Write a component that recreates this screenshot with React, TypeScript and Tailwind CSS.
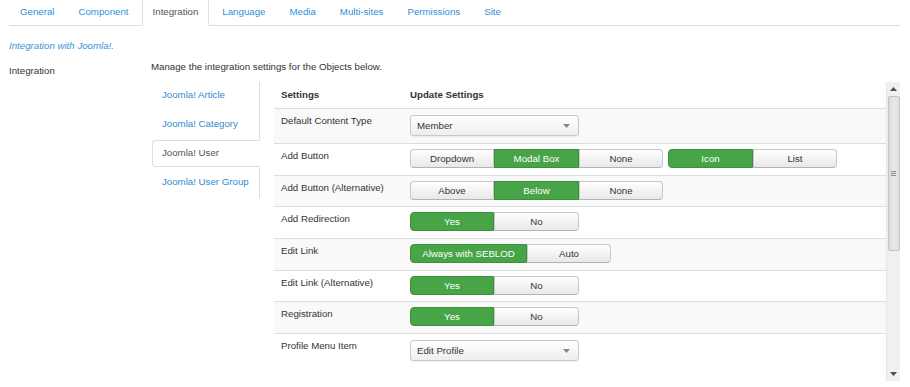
import React from 'react';
import clsx from 'clsx';

const tabs = ['General', 'Component', 'Integration', 'Language', 'Media', 'Multi-sites', 'Permissions', 'Site'];
const objects = ['Joomla! Article', 'Joomla! Category', 'Joomla! User', 'Joomla! User Group'];

interface Seg {
  label: string;
  w: string; // width class, written out in full
  on?: boolean;
}

interface Row {
  label: string;
  h: string;
  pt: string;
  select?: string;
  groups?: Seg[][];
}

const rows: Row[] = [
  { label: 'Default Content Type', h: 'h-[35px]', pt: 'pt-[6px]', select: 'Member' },
  {
    label: 'Add Button',
    h: 'h-[32px]',
    pt: 'pt-[5px]',
    groups: [
      [
        { label: 'Dropdown', w: 'w-[84px]' },
        { label: 'Modal Box', w: 'w-[85px]', on: true },
        { label: 'None', w: 'w-[84px]' },
      ],
      [
        { label: 'Icon', w: 'w-[85px]', on: true },
        { label: 'List', w: 'w-[84px]' },
      ],
    ],
  },
  {
    label: 'Add Button (Alternative)',
    h: 'h-[31px]',
    pt: 'pt-[5px]',
    groups: [
      [
        { label: 'Above', w: 'w-[84px]' },
        { label: 'Below', w: 'w-[85px]', on: true },
        { label: 'None', w: 'w-[84px]' },
      ],
    ],
  },
  {
    label: 'Add Redirection',
    h: 'h-[32px]',
    pt: 'pt-[5px]',
    groups: [[{ label: 'Yes', w: 'w-[84px]', on: true }, { label: 'No', w: 'w-[85px]' }]],
  },
  {
    label: 'Edit Link',
    h: 'h-[32px]',
    pt: 'pt-[5px]',
    groups: [[{ label: 'Always with SEBLOD', w: 'w-[117px]', on: true }, { label: 'Auto', w: 'w-[84px]' }]],
  },
  {
    label: 'Edit Link (Alternative)',
    h: 'h-[31px]',
    pt: 'pt-[5px]',
    groups: [[{ label: 'Yes', w: 'w-[84px]', on: true }, { label: 'No', w: 'w-[85px]' }]],
  },
  {
    label: 'Registration',
    h: 'h-[32px]',
    pt: 'pt-[5px]',
    groups: [[{ label: 'Yes', w: 'w-[84px]', on: true }, { label: 'No', w: 'w-[85px]' }]],
  },
  { label: 'Profile Menu Item', h: 'h-[48px]', pt: 'pt-[6px]', select: 'Edit Profile' },
];

function ButtonGroup({ items }: { items: Seg[] }) {
  return (
    <div className="flex">
      {items.map((it, i) => (
        <div
          key={i}
          className={clsx(
            'h-[19px] flex items-center justify-center border leading-[14px]',
            it.w,
            i === 0 && 'rounded-l-[4px]',
            i === items.length - 1 && 'rounded-r-[4px]',
            it.on
              ? 'bg-[#47a447] border-[#3d8f3d] text-white'
              : 'bg-linear-to-b from-white to-[#e8e8e8] border-[#c8c8c8] border-b-[#b3b3b3] text-[#333]'
          )}
        >
          {it.label}
        </div>
      ))}
    </div>
  );
}

function Select({ value }: { value: string }) {
  return (
    <div className="w-[169px] h-[21px] flex items-center justify-between pl-[6px] pr-[8px] border border-[#c8c8c8] rounded-[3px] bg-linear-to-b from-white to-[#eeeeee] shadow-[0_1px_1px_rgba(0,0,0,0.06)]">
      <span>{value}</span>
      <svg width="7" height="4" viewBox="0 0 7 4">
        <path d="M0 0 L7 0 L3.5 4 Z" fill="#888" />
      </svg>
    </div>
  );
}

function Scrollbar() {
  return (
    <div className="w-[14px] h-[299px] bg-[#f0f0f0] border-l border-[#e6e6e6] flex flex-col items-center">
      <div className="h-[14px] w-full flex items-center justify-center">
        <svg width="7" height="4" viewBox="0 0 7 4">
          <path d="M3.5 0 L7 4 L0 4 Z" fill="#505050" />
        </svg>
      </div>
      <div className="w-[12px] h-[155px] rounded-[2px] border border-[#c4c4c4] bg-linear-to-r from-[#dadada] via-[#e9e9e9] to-[#dedede] flex flex-col items-center justify-center gap-[1px]">
        <div className="w-[5px] h-px bg-[#8a8a8a]" />
        <div className="w-[5px] h-px bg-[#8a8a8a]" />
        <div className="w-[5px] h-px bg-[#8a8a8a]" />
      </div>
      <div className="flex-1" />
      <div className="h-[14px] w-full flex items-center justify-center">
        <svg width="7" height="4" viewBox="0 0 7 4">
          <path d="M0 0 L7 0 L3.5 4 Z" fill="#505050" />
        </svg>
      </div>
    </div>
  );
}

function App() {
  return (
    <div className="w-[910px] h-[387px] overflow-hidden bg-white text-[#333] text-[9.7px] leading-[14px] font-['Liberation_Sans',Arial,sans-serif]">
      {/* top tabs */}
      <div className="mx-[9px] w-[891px] h-[26px] flex border-b border-[#dddddd]">
        {tabs.map((t) => (
          <div
            key={t}
            className={clsx(
              'h-[26px] px-[10px] pt-[5px] mr-[2px] border border-t-0',
              t === 'Integration'
                ? 'bg-white border-[#dddddd] border-b-white text-[#555]'
                : 'border-transparent text-[#2f8fd8]'
            )}
          >
            {t}
          </div>
        ))}
      </div>

      <div className="pl-[9px]">
        <p className="mt-[13px] italic text-[#3a93d8]">Integration with Joomla!.</p>

        <div className="flex">
          <div className="w-[142px] pt-[11px]">Integration</div>

          <div className="flex-1">
            <p className="pt-[7px]">Manage the integration settings for the Objects below.</p>

            <div className="flex mt-[8px] h-[299px]">
              {/* object nav */}
              <div className="ml-[1px] w-[108px] self-start border-r border-[#dddddd]">
                {objects.map((o) => (
                  <div
                    key={o}
                    className={clsx(
                      'h-[27px] mb-[2px] -mr-px pl-[9px] pt-[5px] border rounded-l-[4px]',
                      o === 'Joomla! User'
                        ? 'bg-white border-[#dddddd] border-r-white text-[#555]'
                        : 'border-transparent text-[#2f8bd6]'
                    )}
                  >
                    {o}
                  </div>
                ))}
              </div>

              {/* settings table */}
              <div className="ml-[14px] w-[612px] h-[299px] overflow-hidden">
                <div className="flex h-[26px] pt-[6px] font-bold">
                  <div className="w-[128px] pl-[7px]">Settings</div>
                  <div className="pl-[8px]">Update Settings</div>
                </div>
                {rows.map((r, i) => (
                  <div
                    key={r.label}
                    className={clsx('flex border-t border-[#dddddd]', r.h, i % 2 === 0 ? 'bg-[#f9f9f9]' : 'bg-white')}
                  >
                    <div className="w-[128px] pl-[7px] pt-[5px]">{r.label}</div>
                    <div className={clsx('pl-[8px] flex gap-[5px]', r.pt)}>
                      {r.select && <Select value={r.select} />}
                      {r.groups && r.groups.map((g, j) => <ButtonGroup key={j} items={g} />)}
                    </div>
                  </div>
                ))}
              </div>

              <Scrollbar />
            </div>
          </div>
        </div>
      </div>
    </div>
  );
}

export default App;
